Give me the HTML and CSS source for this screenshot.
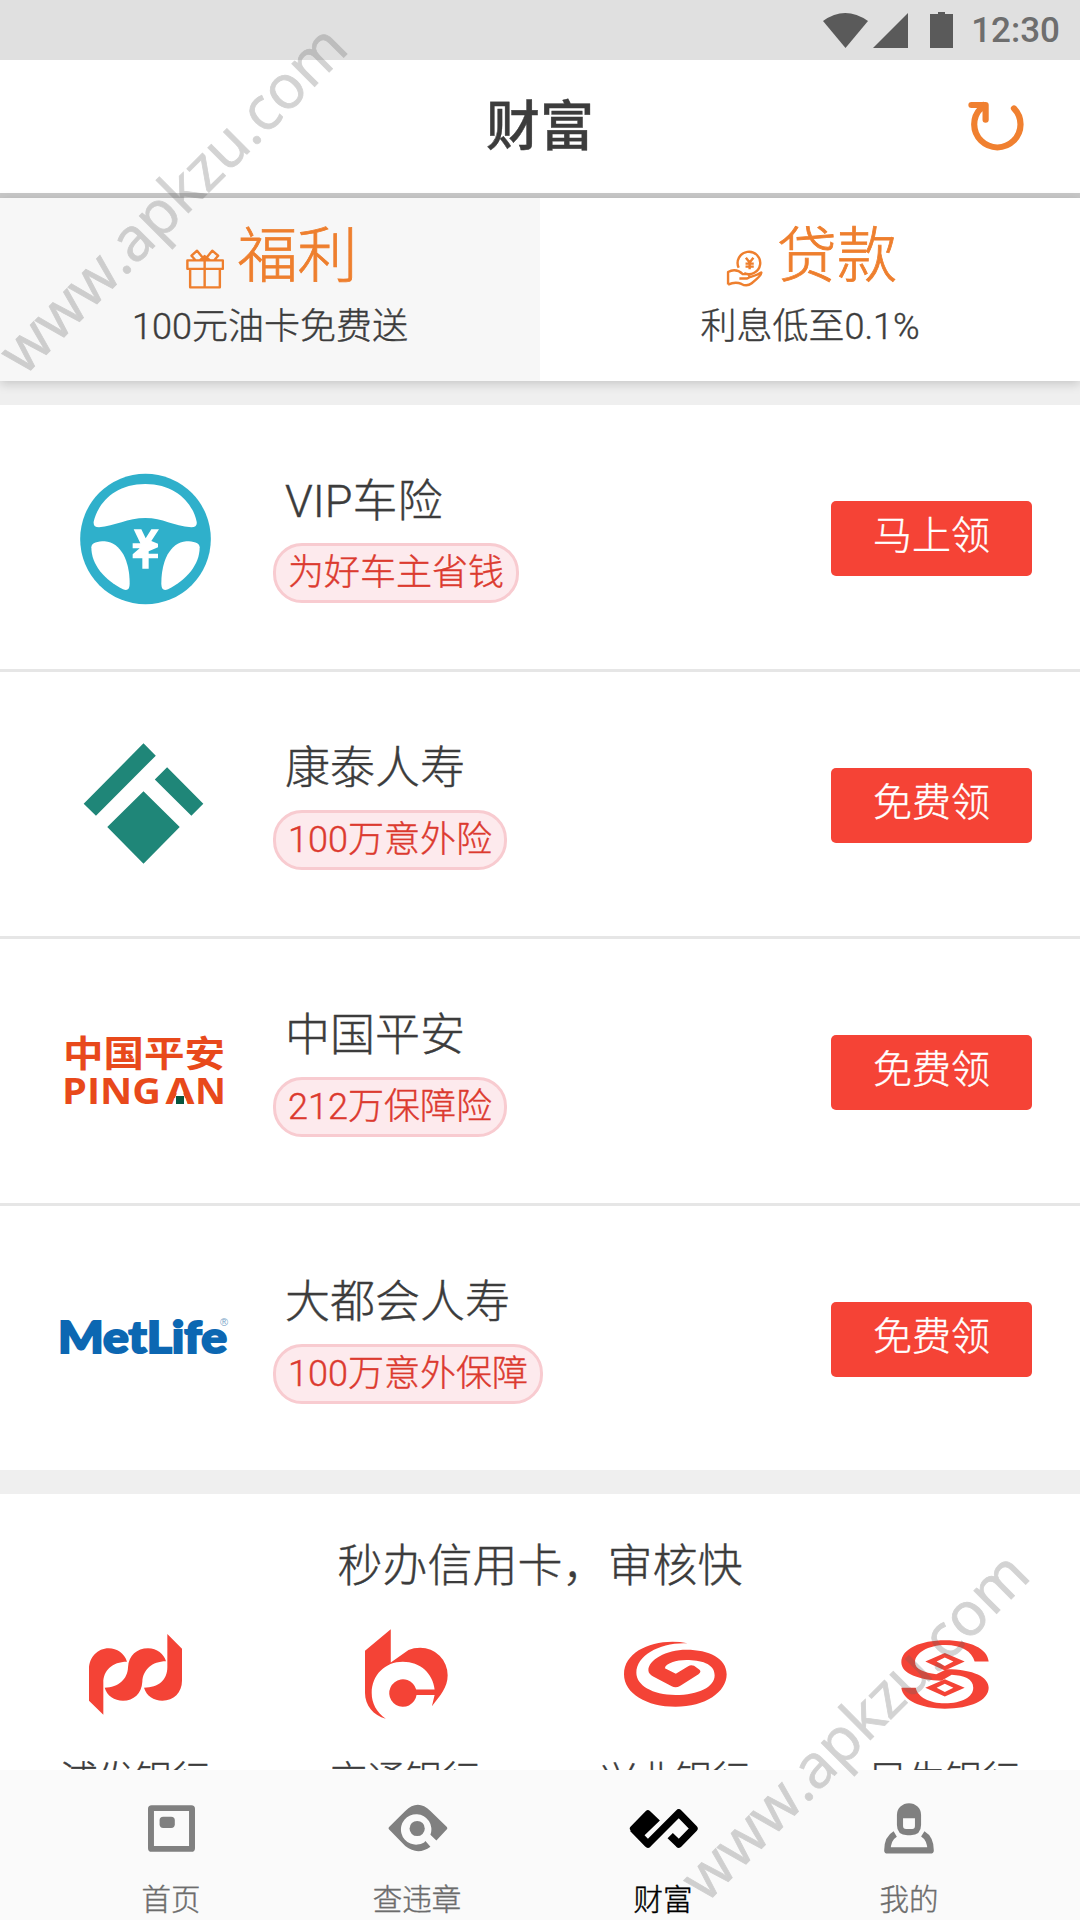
FILE: index.html
```html
<!DOCTYPE html>
<html lang="zh-CN">
<head>
<meta charset="utf-8">
<title>财富</title>
<link rel="stylesheet" href="styles.css">
</head>
<body>
<div class="app">
  <div class="statusbar">
    <svg class="st-wifi" viewBox="0 0 45 35"><path d="M0 8Q22 -8 45 8L22.500 35Z"/></svg>
    <svg class="st-signal" viewBox="0 0 35 35"><path d="M35 0V35H0Z"/></svg>
    <svg class="st-battery" viewBox="0 0 23 36"><path d="M0 2H8V0H15V2H23V36H0Z"/></svg>
    <span class="time">12:30</span>
  </div>
  <header class="header">
    <h1>财富</h1>
    <svg class="refresh" viewBox="1243 300 165 153" preserveAspectRatio="none"><path d="M1376 322A67 69 0 1 1 1280 322L1288 312M1253 312H1294V356"/></svg>
  </header>
  <div class="tabs">
    <div class="tab active">
      <div class="tab-title">
        <svg class="gift" viewBox="538 747 110 119" preserveAspectRatio="none"><path d="M542 781H645V806H542ZM550 806V861H636V806M592 781V861M592 780L570 752L554 767L566 781M578 781L592 768L608 781M592 780L614 752L631 767L619 781"/></svg>
        <span>福利</span>
      </div>
      <div class="tab-sub">100元油卡免费送</div>
    </div>
    <div class="tab">
      <div class="tab-title">
        <svg class="loan" viewBox="543 750 108 109" preserveAspectRatio="none"><path d="M580 802A33 33 0 1 1 596 818M549 852V815C565 806 580 810 592 821H607Q617 831 604 834H582M613 830Q640 821 646 816Q649 823 618 848Q604 859 588 850Q570 842 549 852M601 773L612 787L623 773M612 787V807M600 790H624M600 799H624"/></svg>
        <span>贷款</span>
      </div>
      <div class="tab-sub">利息低至0.1%</div>
    </div>
  </div>
  <main class="content">
    <section class="list">
      <div class="row">
        <div class="logo">
          <svg class="wheel" viewBox="121 99 393 396">
            <circle cx="317.500" cy="297" r="196" fill="#2fb0cb"/>
            <g fill="#fff">
              <path d="M162 245C175 190 225 132 317 132C408 132 460 190 471 245Q474 262 455 262C400 258 370 234 317 234C265 234 225 258 178 262Q160 262 162 245Z"/>
              <path d="M155 322C155 308 175 304 195 304C245 308 270 365 270 430C270 450 262 453 250 448C195 420 155 375 155 322Z"/>
              <path d="M480 322C480 308 460 304 440 304C390 308 365 365 365 430C365 450 373 453 385 448C440 420 480 375 480 322Z"/>
              <path d="M282 268H305L318 295L335 268H358L335 303L355 311V322L327 334V341H355V355H327V386H308V355H279V343L300 325H279V310H302Z"/>
            </g>
          </svg>
        </div>
        <div class="info"><h2>VIP车险</h2><span class="pill">为好车主省钱</span></div>
        <button class="btn">马上领</button>
      </div>
      <div class="row">
        <div class="logo">
          <svg class="kangtai" viewBox="131 100 362 364" fill="#1f8678"><path d="M312 101L349 138L169 319L132 283ZM383 173L492 283L456 319L346 210ZM312 245L421 353L312 463L203 353Z"/></svg>
        </div>
        <div class="info"><h2>康泰人寿</h2><span class="pill">100万意外险</span></div>
        <button class="btn">免费领</button>
      </div>
      <div class="row">
        <div class="logo">
          <svg class="pingan" viewBox="0 0 160 72">
            <text class="pa-cn" x="-2" y="31.500" textLength="162" lengthAdjust="spacingAndGlyphs">中国平安</text>
            <text class="pa-en" x="-3" y="69" textLength="99" lengthAdjust="spacingAndGlyphs">PING</text>
            <text class="pa-en" x="100.500" y="69" textLength="29" lengthAdjust="spacingAndGlyphs">A</text>
            <text class="pa-en" x="130" y="69" textLength="31" lengthAdjust="spacingAndGlyphs">N</text>
            <path d="M115 50L122.500 69.500H107.500Z" fill="#fff"/>
            <path d="M111 61H119V69H111Z" fill="#06563f"/>
          </svg>
        </div>
        <div class="info"><h2>中国平安</h2><span class="pill">212万保障险</span></div>
        <button class="btn">免费领</button>
      </div>
      <div class="row">
        <div class="logo">
          <svg class="metlife" viewBox="0 0 170 44">
            <text class="ml" x="-2" y="37" textLength="169" lengthAdjust="spacingAndGlyphs">MetLife</text>
            <text class="reg" x="160" y="10">®</text>
          </svg>
        </div>
        <div class="info"><h2>大都会人寿</h2><span class="pill">100万意外保障</span></div>
        <button class="btn">免费领</button>
      </div>
    </section>
    <section class="cards">
      <h2>秒办信用卡，审核快</h2>
      <div class="banks">
        <div class="bank">
          <div class="bank-logo"><svg class="spd" viewBox="146 100 279 243"><path d="M146 300V205C146 170 172 143 205 143C230 143 252 158 260 183C215 183 189 210 189 245V342ZM193 261C235 261 262 235 263 200C265 165 290 143 323 143C350 143 371 160 377 182C335 182 308 208 306 243C304 278 280 300 248 300C222 300 200 285 193 261ZM381 100L425 144V240C425 275 400 300 366 300C340 300 318 285 311 261C355 261 381 238 381 200Z"/></svg></div>
          <span>浦发银行</span>
        </div>
        <div class="bank">
          <div class="bank-logo"><svg class="bocom" viewBox="975 87 248 269"><path d="M975 152L1052 88V187L1105 150Q1120 143 1140 143A82 82 0 0 1 1222 225C1222 262 1200 285 1175 318L1183 284H1129A41 41 0 1 1 1128 268H1183C1178 220 1140 185 1088 185C1035 185 995 225 995 278C995 310 1010 335 1037 355C1000 345 975 315 975 278Z"/></svg></div>
          <span>交通银行</span>
        </div>
        <div class="bank">
          <div class="bank-logo"><svg class="cib" viewBox="243 123 300 197" preserveAspectRatio="none"><path d="M428 130C340 112 243 150 243 222C243 280 310 319 393 319C480 319 542 275 542 222C542 175 490 149 425 149C365 149 314 180 314 210C314 218 320 224 328 229L382 258Q394 264 406 257L460 222Q470 215 462 208L447 197Q438 193 430 198L394 221L362 204C365 190 395 180 425 180C465 180 507 190 507 225C507 260 460 284 393 284C325 284 279 255 279 218C279 165 350 126 428 130Z"/></svg></div>
          <span>兴业银行</span>
        </div>
        <div class="bank">
          <div class="bank-logo"><svg class="cmbc" viewBox="1047 118 257 208" preserveAspectRatio="none"><path fill-rule="evenodd" d="M1303 183H1262C1255 152 1222 133 1178 133C1125 133 1088 157 1088 185C1088 207 1115 216 1150 221L1180 206C1260 206 1303 230 1303 262C1303 300 1250 325 1175 325C1105 325 1052 300 1048 262H1090C1095 290 1130 309 1175 309C1225 309 1258 290 1258 262C1258 235 1230 225 1195 223L1165 241C1100 238 1048 220 1048 185C1048 145 1105 119 1175 119C1250 119 1300 145 1303 183Z"/><path fill-rule="evenodd" d="M1175 157L1233 183L1175 210L1118 183ZM1175 171L1151 183L1175 196L1200 183ZM1175 236L1233 262L1175 288L1118 262ZM1175 250L1151 262L1175 275L1200 262Z"/></svg></div>
          <span>民生银行</span>
        </div>
      </div>
    </section>
  </main>
  <nav class="nav">
    <a class="nav-item">
      <span class="nav-icon"><svg class="i-home" viewBox="322 615 142 141"><rect x="331" y="624" width="124" height="123" rx="2" fill="none" stroke="#808080" stroke-width="18"/><rect x="357" y="650" width="46" height="34" rx="11"/></svg></span>
      <span>首页</span>
    </a>
    <a class="nav-item">
      <span class="nav-icon"><svg class="i-eye" viewBox="1044 611 181 145"><path d="M1048 680L1096 632Q1134 594 1172 632L1221 680Q1225 684 1221 688L1190 721L1172 704A46 46 0 1 0 1153 727L1157 723L1172 740Q1134 768 1096 738L1048 689Q1043 684 1048 680Z"/><circle cx="1132" cy="685" r="23"/></svg></span>
      <span>查违章</span>
    </a>
    <a class="nav-item current">
      <span class="nav-icon"><svg class="i-wealth" viewBox="257 628 201 116" preserveAspectRatio="none"><path d="M262 680L306 634Q312 628 318 634L347 662L300 708L290 714L262 692Q256 686 262 680Z"/><path d="M268 686L312 732L402 640L446 686L402 732L377 707" fill="none" stroke="#000" stroke-width="22" stroke-linejoin="round"/></svg></span>
      <span>财富</span>
    </a>
    <a class="nav-item">
      <span class="nav-icon"><svg class="i-me" viewBox="998 605 147 155" preserveAspectRatio="none"><path fill-rule="evenodd" d="M1036 641A35.500 35.500 0 0 1 1107 641V672Q1107 703 1076 703H1067Q1036 703 1036 672ZM1054 651V675Q1054 684 1063 684H1081Q1089 684 1089 675V651Z"/><path d="M1031 699C1012 710 1008 730 1008 749H1135C1135 730 1130 710 1112 699" fill="none" stroke="#808080" stroke-width="19" stroke-linejoin="round"/></svg></span>
      <span>我的</span>
    </a>
  </nav>
  <div class="watermark wm-top">www.apkzu.com</div>
  <div class="watermark wm-bottom">www.apkzu.com</div>
</div>
</body>
</html>
```
FILE: styles.css
```css
* { box-sizing: border-box; margin: 0; padding: 0; }

body {
  width: 1080px;
  height: 1920px;
  overflow: hidden;
  background: #efefef;
  color: #3c3c3c;
  font-family: "Noto Sans CJK SC", sans-serif;
  font-weight: 300;
  -webkit-text-stroke: 0.4px;
}

svg { display: block; flex: none; }

.app {
  position: relative;
  display: flex;
  flex-direction: column;
  width: 1080px;
  height: 1920px;
  overflow: hidden;
}

.statusbar {
  display: flex;
  align-items: center;
  justify-content: flex-end;
  flex: none;
  height: 60px;
  padding-right: 20px;
  background: #e0e0e0;
  fill: #5a5a5a;
}
.st-wifi { width: 45px; height: 35px; margin-right: 5px; }
.st-signal { width: 35px; height: 35px; margin-right: 22px; }
.st-battery { width: 23px; height: 36px; margin-right: 18px; }
.time {
  padding-top: 2px;
  color: #6e6e6e;
  font: 500 35px/60px Roboto, sans-serif;
  -webkit-text-stroke: 0;
}

.header {
  display: grid;
  grid-template-columns: 1fr auto 1fr;
  align-items: center;
  flex: none;
  height: 138px;
  padding-right: 55px;
  padding-left: 55px;
  border-bottom: 5px solid #c8c8c8;
  background: #fff;
}
.header h1 {
  grid-column: 2;
  padding-bottom: 8px;
  font-size: 54px;
  font-weight: 500;
  line-height: 80px;
}
.refresh {
  justify-self: end;
  width: 57px;
  height: 51px;
  fill: none;
  stroke: #f08030;
  stroke-width: 18;
  stroke-linecap: round;
  stroke-linejoin: round;
}

.tabs {
  display: grid;
  grid-template-columns: 1fr 1fr;
  flex: none;
  height: 183px;
  box-shadow: 0 3px 10px rgba(0, 0, 0, 0.17);
  z-index: 1;
}
.tab {
  display: flex;
  flex-direction: column;
  align-items: center;
  padding-top: 12px;
  background: #fff;
}
.tab.active { background: #f7f7f7; }
.tab-title {
  display: flex;
  align-items: center;
  height: 86px;
  padding-left: 3px;
  color: #ee7f2e;
  font-size: 60px;
  line-height: 86px;
}
.tab-title span { padding-bottom: 5px; -webkit-text-stroke: 0.8px; }
.tab-title svg {
  fill: none;
  stroke: #ee7f2e;
  stroke-width: 7;
  stroke-linejoin: round;
}
.gift { width: 38px; height: 40px; margin: 32px 14px 0 0; }
.tab-title .loan { width: 37px; height: 37px; margin: 30px 14px 0 0; }
.tab-sub { font-family: Roboto, "Noto Sans CJK SC", sans-serif; font-size: 36px; line-height: 62px; }

.content { flex: 1; min-height: 0; padding-top: 24px; overflow: hidden; }

.list, .cards { background: #fff; }
.row {
  display: flex;
  align-items: flex-start;
  height: 267px;
  padding-right: 48px;
  border-bottom: 3px solid #e6e6e6;
}
.row:last-child { height: 264px; border-bottom: 0; }
.logo {
  display: flex;
  align-items: center;
  justify-content: center;
  width: 273px;
  height: 264px;
  padding-left: 17px;
}
.wheel { width: 131px; height: 132px; margin-top: 3px; }
.kangtai { width: 121px; height: 121px; margin: 0 4px 1px 0; }
.pingan { width: 160px; height: 72px; margin-right: 1px; overflow: visible; }
.pa-cn { fill: #e8491b; font-size: 36px; font-weight: 700; }
.pa-en { fill: #e8491b; font: 700 35px "Open Sans", sans-serif; }
.metlife { width: 170px; height: 44px; overflow: visible; }
.ml { fill: #0c67b2; font: 900 43px Lato, sans-serif; stroke: #0c67b2; stroke-width: 2px; }
.reg { fill: #7aa5c8; font: 400 11px "Liberation Sans", sans-serif; }

.info {
  display: flex;
  flex: 1;
  flex-direction: column;
  align-items: flex-start;
  padding-top: 60px;
  font-family: Roboto, "Noto Sans CJK SC", sans-serif;
}
.info h2 {
  height: 74px;
  margin: 0 0 4px 12px;
  font-size: 45px;
  font-weight: 300;
  line-height: 74px;
}
.pill {
  height: 60px;
  padding: 0 12px;
  border: 3px solid #f8cbd0;
  border-radius: 29px;
  background: #fdeaed;
  color: #dc3a2f;
  font-size: 36px;
  line-height: 55px;
}
.btn {
  width: 201px;
  height: 75px;
  margin-top: 96px;
  padding-bottom: 13px;
  border: 0;
  border-radius: 5px;
  background: #f54336;
  color: #fff;
  font: 300 39px/62px "Noto Sans CJK SC", sans-serif;
}

.cards { height: 460px; margin-top: 24px; padding-top: 37px; }
.cards h2 {
  font-size: 45px;
  font-weight: 300;
  line-height: 64px;
  text-align: center;
}
.banks { display: grid; grid-template-columns: repeat(4, 1fr); }
.bank { display: flex; flex-direction: column; align-items: center; font-size: 37.500px; line-height: 54px; }
.bank-logo { display: flex; align-items: center; height: 155px; fill: #f44336; }
.spd { width: 93px; height: 81px; margin-top: 3px; }
.bocom { width: 83px; height: 90px; margin: 3px 0 0 2px; }
.cib { width: 103px; height: 66px; margin-top: 3px; }
.cmbc { width: 88px; height: 69px; margin-top: 3px; }

.nav {
  display: grid;
  grid-template-columns: repeat(4, 1fr);
  flex: none;
  height: 150px;
  padding: 0 48px;
  background: #fafafa;
}
.nav-item {
  display: flex;
  flex-direction: column;
  align-items: center;
  color: #6c6c6c;
  fill: #808080;
  font-size: 29.500px;
  line-height: 44px;
}
.nav-item.current { color: #000; fill: #000; }
.nav-icon { display: flex; align-items: center; height: 105px; padding-top: 11px; }
.i-home { width: 47px; height: 47px; }
.i-eye { width: 60px; height: 48px; margin-left: 2px; }
.i-wealth { width: 69px; height: 39px; }
.i-me { width: 50px; height: 51px; }

.watermark {
  position: absolute;
  z-index: 2;
  color: #646464;
  font: 400 60.500px/60px "Open Sans", sans-serif;
  -webkit-text-stroke: 0.8px;
  opacity: 0.28;
  white-space: nowrap;
  transform: rotate(-45deg);
  transform-origin: 0 100%;
}
.wm-top { left: 29px; top: 322px; }
.wm-bottom { left: 711px; top: 1849px; }
```
